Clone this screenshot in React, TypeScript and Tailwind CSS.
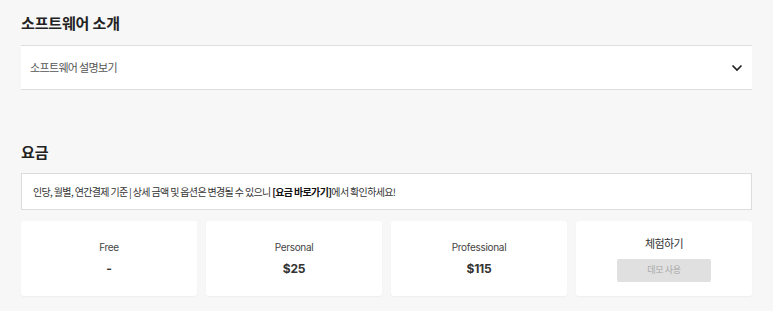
import React from "react";

interface Plan {
  name: string;
  price: string;
}

const plans: Plan[] = [
  { name: "Free", price: "-" },
  { name: "Personal", price: "$25" },
  { name: "Professional", price: "$115" },
];

const ko = "font-['Noto_Sans_CJK_KR',sans-serif]";
const latin = "font-['Inter','Noto_Sans_CJK_KR',sans-serif]";

const ChevronDown: React.FC = () => (
  <svg width="12" height="8" viewBox="0 0 12 8" fill="none">
    <path d="M1.5 1.5 L6 6 L10.5 1.5" stroke="#222" strokeWidth="1.7" />
  </svg>
);

const App: React.FC = () => {
  return (
    <div className={`${ko} min-h-[311px] bg-[#f7f7f7] px-[21px] pt-[12px]`}>
      <h2 className="h-[22px] leading-[22px] text-[15px] font-bold text-[#222] tracking-[-0.01em]">
        소프트웨어 소개
      </h2>

      <div className="mt-[11px] flex h-[45px] items-center justify-between border-y border-[#dedede] bg-white pl-[9px] pr-[9px]">
        <span className="text-[11px] text-[#555] tracking-[-0.06em]">
          소프트웨어 설명보기
        </span>
        <ChevronDown />
      </div>

      <h2 className="mt-[51px] h-[22px] leading-[22px] text-[15px] font-bold text-[#222] tracking-[-0.01em]">
        요금
      </h2>

      <div className="mt-[10px] flex h-[37px] items-center border border-[#dcdcdc] bg-white px-[11px]">
        <p className="text-[10px] text-[#333] tracking-[-0.065em]">
          인당, 월별, 연간결제 기준 | 상세 금액 및 옵션은 변경될 수 있으니{" "}
          <b className="font-bold text-[#111]">[요금 바로가기]</b>에서
          확인하세요!
        </p>
      </div>

      <div className="mt-[11px] grid grid-cols-4 gap-[9px]">
        {plans.map((plan) => (
          <div
            key={plan.name}
            className={`${latin} flex h-[75px] flex-col items-center justify-center gap-[6px] rounded-[3px] bg-white shadow-[0_1px_2px_rgba(0,0,0,0.04)]`}
          >
            <span className="h-[14px] leading-[14px] text-[10px] text-[#444] tracking-[-0.03em]">
              {plan.name}
            </span>
            <span className="h-[18px] leading-[18px] text-[12px] font-bold text-[#333] tracking-[-0.02em]">
              {plan.price}
            </span>
          </div>
        ))}
        <div className="flex h-[75px] flex-col items-center justify-center gap-[9px] rounded-[3px] bg-white shadow-[0_1px_2px_rgba(0,0,0,0.04)]">
          <span className="h-[14px] leading-[14px] text-[11px] text-[#333] tracking-[-0.06em]">
            체험하기
          </span>
          <button
            type="button"
            disabled
            className="h-[23px] w-[94px] rounded-[2px] bg-[#e0e0e0] text-[9px] text-[#aaa] tracking-[-0.04em]"
          >
            데모 사용
          </button>
        </div>
      </div>
    </div>
  );
};

export default App;
